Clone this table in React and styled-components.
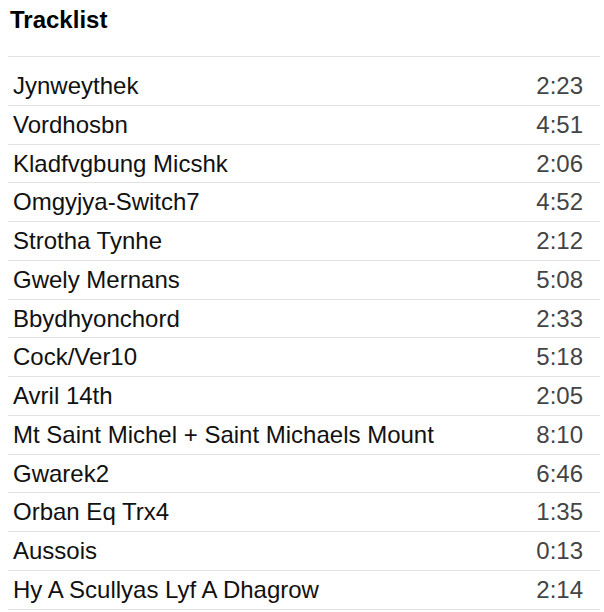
import React from "react";
import styled, { createGlobalStyle } from "styled-components";

const tracks = [
  { title: "Jynweythek", length: "2:23" },
  { title: "Vordhosbn", length: "4:51" },
  { title: "Kladfvgbung Micshk", length: "2:06" },
  { title: "Omgyjya-Switch7", length: "4:52" },
  { title: "Strotha Tynhe", length: "2:12" },
  { title: "Gwely Mernans", length: "5:08" },
  { title: "Bbydhyonchord", length: "2:33" },
  { title: "Cock/Ver10", length: "5:18" },
  { title: "Avril 14th", length: "2:05" },
  { title: "Mt Saint Michel + Saint Michaels Mount", length: "8:10" },
  { title: "Gwarek2", length: "6:46" },
  { title: "Orban Eq Trx4", length: "1:35" },
  { title: "Aussois", length: "0:13" },
  { title: "Hy A Scullyas Lyf A Dhagrow", length: "2:14" },
];

export default function App() {
  return (
    <>
      <GlobalStyle />
      <Page>
        <Header>
          <Title>Tracklist</Title>
        </Header>
        <List>
          {tracks.map((t) => (
            <Row key={t.title}>
              <Name>{t.title}</Name>
              <Length>{t.length}</Length>
            </Row>
          ))}
        </List>
      </Page>
    </>
  );
}

const GlobalStyle = createGlobalStyle`
  body {
    margin: 0;
    background: #fff;
    font-family: "Liberation Sans", Arial, sans-serif;
  }
`;

const Page = styled.div`
  padding: 6px 4px 0 8px;
`;

const Header = styled.div`
  padding: 0 0 22px 2px;
  border-bottom: 1px solid #e2e2e2;
`;

const Title = styled.h2`
  margin: 0;
  font-size: 24px;
  line-height: 28px;
  font-weight: 700;
  color: #000;
`;

const List = styled.ul`
  list-style: none;
  margin: 10px 0 0;
  padding: 0;
`;

const Row = styled.li`
  display: flex;
  justify-content: space-between;
  align-items: center;
  padding: 5px 17px 5px 5px;
  border-bottom: 1px solid #e2e2e2;
  font-size: 24px;
  line-height: 27.75px;
`;

const Name = styled.span`
  color: #111;
`;

const Length = styled.span`
  color: #444;
`;
